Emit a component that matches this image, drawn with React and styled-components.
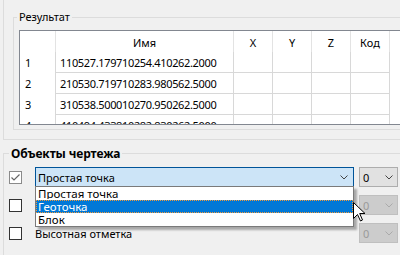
import React from "react";
import styled, { createGlobalStyle } from "styled-components";

const Global = createGlobalStyle`
  html, body { margin: 0; padding: 0; background: #f0f0f0; overflow: hidden; }
  * { box-sizing: border-box; }
`;

const Window = styled.div`
  position: relative;
  width: 400px;
  height: 255px;
  overflow: hidden;
  background: #f0f0f0;
  font-family: "Noto Sans", "Open Sans", sans-serif;
  font-size: 11px;
  color: #000;
`;

const ResultPanel = styled.div`
  margin-left: 3px;
  width: 430px;
  height: 140px;
  border-left: 1px solid #dcdcdc;
  border-bottom: 1px solid #dcdcdc;
  padding: 11px 0 0 9px;
`;

const GroupBox = styled.fieldset`
  margin: ${(p) => p.$margin || 0};
  min-width: 0;
  width: 430px;
  border: 1px solid #dcdcdc;
  padding: ${(p) => p.$pad};
`;

const Legend = styled.legend`
  margin-left: ${(p) => p.$offset}px;
  padding: 0 2px;
  line-height: ${(p) => (p.$bold ? 13 : 12)}px;
  font-size: ${(p) => (p.$bold ? 12 : 11)}px;
  font-weight: ${(p) => (p.$bold ? 700 : 400)};
  letter-spacing: ${(p) => (p.$bold ? -0.1 : 0)}px;
`;

const Table = styled.div`
  margin-left: 5px;
  width: 420px;
  height: 95px;
  border: 1px solid #828790;
  background: #fff;
  overflow: hidden;
`;

const Grid = styled.div`
  display: grid;
  grid-template-columns: 36px 178px 39px 39px 39px 39px;
  grid-auto-rows: 21px;
`;

const HeadCell = styled.div`
  height: 22px;
  display: flex;
  align-items: center;
  justify-content: center;
  border-right: 1px solid #e3e3e3;
`;

const RowHead = styled.div`
  display: flex;
  align-items: center;
  padding-left: 5px;
  border-right: 1px solid #d8d8d8;
`;

const Cell = styled.div`
  display: flex;
  align-items: center;
  padding-left: 4px;
  border-right: 1px solid #d8d8d8;
  border-bottom: 1px solid #d8d8d8;
  white-space: nowrap;
  overflow: hidden;
  letter-spacing: -0.35px;
`;

const Rows = styled.div`
  display: flex;
  flex-direction: column;
  gap: 8px;
`;

const Row = styled.div`
  display: flex;
  align-items: center;
  height: 20px;
`;

const Check = styled.div`
  flex: 0 0 13px;
  height: 13px;
  border: 1px solid ${(p) => (p.$checked ? "#8a8a8a" : "#333")};
  background: #fff;
  margin-right: 13px;
  display: flex;
  align-items: center;
  justify-content: center;
`;

const Label = styled.div`
  flex: 0 0 319px;
  white-space: nowrap;
`;

const Combo = styled.div`
  position: relative;
  flex: 0 0 319px;
  height: 20px;
  background: #cce4f7;
  border: 1px solid #005499;
  padding: 0 5px 0 2px;
  display: flex;
  align-items: center;
  justify-content: space-between;
`;

const Spacer = styled.div`
  flex: 0 0 319px;
`;

const List = styled.div`
  position: absolute;
  top: 100%;
  left: -1px;
  right: -1px;
  background: #fff;
  border: 1px solid #7a7a7a;
  box-shadow: 3px 3px 2px rgba(0, 0, 0, 0.3);
  z-index: 2;
`;

const Item = styled.div`
  height: 13px;
  line-height: 11px;
  padding-left: ${(p) => (p.$selected ? 1 : 2)}px;
  background: ${(p) => (p.$selected ? "#0078d7" : "#fff")};
  color: ${(p) => (p.$selected ? "#fff" : "#000")};
  border: ${(p) => (p.$selected ? "1px dotted #f29a3a" : "1px solid transparent")};
  border-left-width: ${(p) => (p.$selected ? 1 : 0)}px;
  border-right-width: ${(p) => (p.$selected ? 1 : 0)}px;
  font-size: 11.5px;
  white-space: nowrap;
  overflow: hidden;
`;

const SmallCombo = styled.div`
  flex: 0 0 39px;
  margin-left: 5px;
  height: 20px;
  background: ${(p) => (p.$disabled ? "#cccccc" : "#e1e1e1")};
  border: 1px solid ${(p) => (p.$disabled ? "#bfbfbf" : "#adadad")};
  color: ${(p) => (p.$disabled ? "#9a9a9a" : "#000")};
  padding: 0 4px 0 3px;
  display: flex;
  align-items: center;
  justify-content: space-between;
`;

const Cursor = styled.svg`
  position: absolute;
  left: 353px;
  top: 202px;
  z-index: 5;
`;

const Chevron = ({ color = "#333" }) => (
  <svg width="8" height="5" viewBox="0 0 8 5">
    <polyline points="0.5,0.5 4,4 7.5,0.5" fill="none" stroke={color} strokeWidth="1" />
  </svg>
);

const rows = [
  ["1", "110527.179710254.410262.2000"],
  ["2", "210530.719710283.980562.5000"],
  ["3", "310538.500010270.950262.5000"],
  ["4", "410494.433810282.830262.5000"],
];

export default function App() {
  return (
    <Window>
      <Global />
      <ResultPanel>
        <GroupBox $pad="7px 0 4px 0">
          <Legend $offset={3}>Результат</Legend>
          <Table>
            <Grid>
              <HeadCell />
              <HeadCell>Имя</HeadCell>
              <HeadCell>X</HeadCell>
              <HeadCell>Y</HeadCell>
              <HeadCell>Z</HeadCell>
              <HeadCell>Код</HeadCell>
              {rows.map(([n, name]) => (
                <React.Fragment key={n}>
                  <RowHead>{n}</RowHead>
                  <Cell>{name}</Cell>
                  <Cell />
                  <Cell />
                  <Cell />
                  <Cell />
                </React.Fragment>
              ))}
            </Grid>
          </Table>
        </GroupBox>
      </ResultPanel>

      <GroupBox $margin="7px 0 0 3px" $pad="7px 0 40px 5px">
        <Legend $offset={0} $bold>
          Объекты чертежа
        </Legend>
        <Rows>
          <Row>
            <Check $checked>
              <svg width="11" height="11" viewBox="0 0 11 11">
                <polyline points="1.5,5.5 4,8 9.5,2.5" fill="none" stroke="#666" strokeWidth="1.2" />
              </svg>
            </Check>
            <Combo>
              <span>Простая точка</span>
              <Chevron color="#444" />
              <List>
                <Item>Простая точка</Item>
                <Item $selected>Геоточка</Item>
                <Item>Блок</Item>
              </List>
            </Combo>
            <SmallCombo>
              <span>0</span>
              <Chevron color="#444" />
            </SmallCombo>
          </Row>
          <Row>
            <Check />
            <Spacer />
            <SmallCombo $disabled>
              <span>0</span>
              <Chevron color="#aaa" />
            </SmallCombo>
          </Row>
          <Row>
            <Check />
            <Label>Высотная отметка</Label>
            <SmallCombo $disabled>
              <span>0</span>
              <Chevron color="#aaa" />
            </SmallCombo>
          </Row>
        </Rows>
      </GroupBox>

      <Cursor width="13" height="20" viewBox="0 0 13 20">
        <polygon
          points="0.5,0.5 0.5,16.5 4.5,12.5 7.5,19 9.5,18 6.7,11.5 12,11.5"
          fill="#fff"
          stroke="#000"
          strokeWidth="1"
          strokeLinejoin="round"
        />
      </Cursor>
    </Window>
  );
}
